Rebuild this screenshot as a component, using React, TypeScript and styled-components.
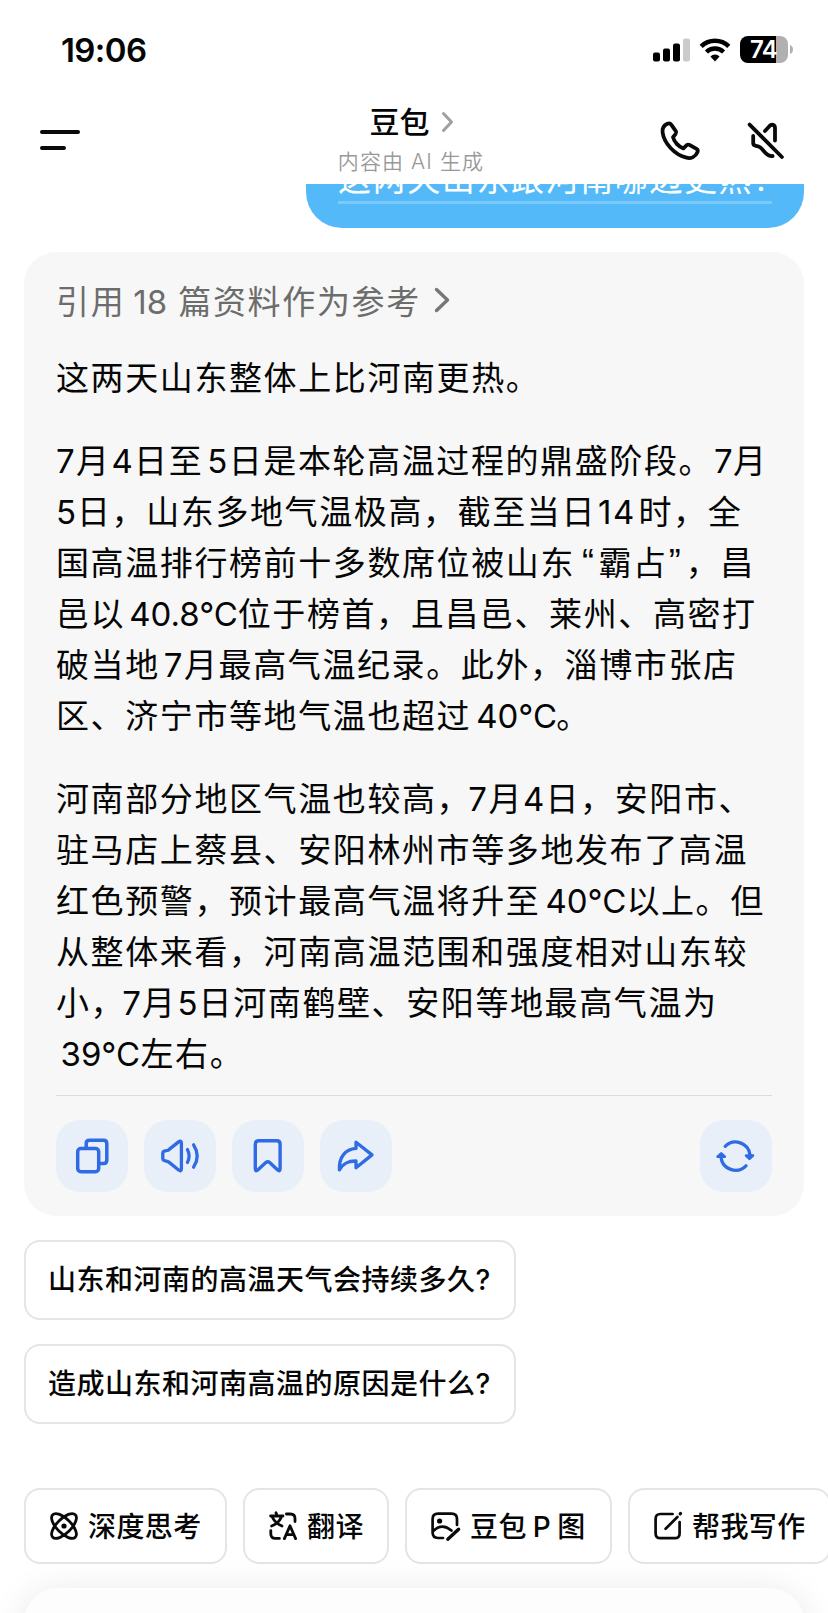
import React from 'react';
import styled, { createGlobalStyle } from 'styled-components';

const GlobalStyle = createGlobalStyle`
  * { box-sizing: border-box; }
  body {
    margin: 0;
    background: #fff;
    color: #060606;
    font-family: Inter, "Noto Sans CJK SC", sans-serif;
  }
  button {
    margin: 0;
    padding: 0;
    border: 0;
    background: none;
    color: inherit;
    font: inherit;
  }
  svg { display: block; flex: none; overflow: visible; }
`;

const Screen = styled.div`
  width: 828px;
  height: 1613px;
  overflow: hidden;
  display: flex;
  flex-direction: column;
`;

const StatusBar = styled.div`
  height: 98px;
  flex: none;
  display: flex;
  justify-content: space-between;
  padding: 36px 35px 0 61px;
`;

const Clock = styled.div`
  font-size: 33px;
  font-weight: 600;
  line-height: 28px;
  letter-spacing: -0.6px;
`;

const StatusIcons = styled.div`
  display: flex;
  gap: 9px;
  height: 27px;
  align-items: center;
`;

const Battery = styled.div`
  width: 48px;
  height: 27px;
  padding-right: 1px;
  border-radius: 8px;
  background: linear-gradient(90deg, #000 36px, #b0b0b0 36px);
  color: #fff;
  font-size: 24px;
  font-weight: 600;
  line-height: 28px;
  letter-spacing: -0.8px;
  text-align: center;
`;

const BatteryWrap = styled.div`
  display: flex;
  align-items: center;
  gap: 2px;
`;

const Header = styled.header`
  height: 86px;
  flex: none;
  display: flex;
  justify-content: space-between;
  padding: 0 42px 0 40px;
`;

const MenuButton = styled.button`
  width: 126px;
  height: 22px;
  margin-top: 31px;
`;

const TitleBlock = styled.div`
  width: 160px;
  margin-right: 4px;
  display: flex;
  flex-direction: column;
  align-items: center;
`;

const Title = styled.div`
  display: flex;
  align-items: center;
  gap: 12px;
  height: 48px;
  font-size: 30px;
  line-height: 44px;
  font-weight: 500;
`;

const Subtitle = styled.div`
  color: #999;
  font-size: 21px;
  line-height: 28px;
  letter-spacing: 1.1px;
  font-weight: 350;
  white-space: nowrap;
  margin-top: 2px;
`;

const HeaderActions = styled.div`
  display: flex;
  gap: 46px;
  padding-top: 23px;
`;

const Conversation = styled.main`
  flex: none;
  height: 1288px;
  overflow: hidden;
  padding: 0 24px;
  display: flex;
  flex-direction: column;
  align-items: flex-start;
`;

const UserBubble = styled.div`
  align-self: flex-end;
  flex: none;
  width: 498px;
  height: 98px;
  margin-top: -54px;
  padding: 24px 32px 0;
  border-radius: 36px;
  background: #54b9f9;
  color: #fff;
`;

const UserText = styled.div`
  height: 50px;
  font-size: 33px;
  line-height: 50px;
  letter-spacing: 1.6px;
  white-space: nowrap;
  border-bottom: 3px solid #79c9fb;
`;

const AnswerCard = styled.article`
  width: 780px;
  height: 964px;
  flex: none;
  margin-top: 24px;
  padding: 22px 32px;
  border-radius: 32px;
  background: #f7f7f7;
`;

const SourceLink = styled.div`
  display: flex;
  align-items: center;
  height: 51px;
  color: #6c6c6c;
  font-size: 33px;
  letter-spacing: 1.65px;
  gap: 14px;
`;

const Paragraph = styled.p`
  margin: 0;
  padding-top: 32px;
  font-size: 33px;
  line-height: 51px;
  letter-spacing: 1.6px;
  &:first-of-type { padding-top: 28px; }
`;

const Line = styled.span`
  display: block;
  height: 51px;
  white-space: nowrap;
`;

const Latin = styled.span<{ $w: number; $x?: number; $ls?: number }>`
  display: inline-block;
  width: ${p => p.$w}px;
  text-indent: ${p => p.$x ?? 0}px;
  letter-spacing: ${p => p.$ls ?? 0}px;
`;

const Quote = styled(Latin)`
  font-family: "Liberation Sans", sans-serif;
  font-size: 36px;
  line-height: 40px;
`;

const Actions = styled.div`
  display: flex;
  gap: 16px;
  margin-top: 15px;
  padding-top: 24px;
  border-top: 1px solid #dcdcdc;
`;

const ActionButton = styled.button<{ $end?: boolean }>`
  width: 72px;
  height: 72px;
  border-radius: 24px;
  background: #e8eff8;
  margin-left: ${p => (p.$end ? 'auto' : 0)};
`;

const Suggestion = styled.button`
  flex: none;
  width: 492px;
  height: 80px;
  margin-top: 24px;
  padding: 0 22px 4px;
  border: 2px solid #e5e5e5;
  border-radius: 16px;
  background: #fff;
  text-align: left;
  font-size: 28px;
  font-weight: 500;
  letter-spacing: 0.5px;
  white-space: nowrap;
`;

const ChipRow = styled.nav`
  display: flex;
  flex: none;
  gap: 16px;
  padding: 16px 0 0 24px;
  height: 116px;
`;

const Chip = styled.button<{ $w: number }>`
  flex: none;
  display: flex;
  align-items: center;
  gap: 10px;
  width: ${p => p.$w}px;
  height: 76px;
  padding-left: 24px;
  border: 2px solid #e5e5e5;
  border-radius: 16px;
  font-size: 28px;
  font-weight: 500;
  letter-spacing: 0.4px;
  word-spacing: -1.8px;
  white-space: nowrap;
`;

const ChipLabel = styled.span`
  padding-bottom: 2px;
`;

const Composer = styled.div`
  flex: none;
  width: 780px;
  height: 112px;
  margin-left: 24px;
  border-radius: 34px;
  background: #fdfdfd;
  box-shadow: 0 4px 36px rgba(0, 0, 0, 0.1);
`;

const stroke = (width: number, color = '#0a0a0a') => ({
  fill: 'none',
  stroke: color,
  strokeWidth: width,
  strokeLinecap: 'round' as const,
  strokeLinejoin: 'round' as const,
});
const BLUE = '#2f6be4';

const SignalIcon = () => (
  <svg width="37" height="24" viewBox="0 0 37 24">
    <rect x="0" y="14.5" width="7" height="9" rx="2" />
    <rect x="10" y="10.5" width="7" height="13" rx="2" />
    <rect x="20" y="5.5" width="7" height="18" rx="2" />
    <rect x="30" y="0.5" width="7" height="23" rx="2" fill="#cbcbcb" />
  </svg>
);

const WifiIcon = () => (
  <svg width="32" height="24" viewBox="0 0 32 24">
    <path d="M2.2 8.3A20 20 0 0 1 29.8 8.3" fill="none" stroke="#000" strokeWidth="4.6" />
    <path d="M7.4 14A12.4 12.4 0 0 1 24.6 14" fill="none" stroke="#000" strokeWidth="4.4" />
    <path d="M11.4 18.4a6.8 6.8 0 0 1 9.2 0L16 23.5z" />
  </svg>
);

const Chevron = ({ color, w, h, s }: { color: string; w: number; h: number; s: number }) => (
  <svg width={w} height={h} viewBox={`0 0 ${w} ${h}`}>
    <path d={`M1.5 1.5L${w - 1.5} ${h / 2}L1.5 ${h - 1.5}`} {...stroke(s, color)} />
  </svg>
);

const PhoneIcon = () => (
  <svg width="40" height="40" viewBox="0 0 40 40">
    <path
      d="M7.3 2.8C8.9 2.1 10.4 2.4 11.4 3.8L15.8 10.2C16.5 11.2 16.4 12 15.7 12.9L13 16.2C14 20.6 18.6 25.8 23.4 27.4L26.7 24.2C27.5 23.5 28.5 23.4 29.5 23.9L36.5 27.9C37.7 28.6 38 29.9 37.4 31.2C35.5 35.6 31 37.8 26.5 36.7C14.5 33.8 4 22 2.6 11.5C2.1 7.8 4 4.3 7.3 2.8Z"
      {...stroke(3.8)}
    />
  </svg>
);

const MuteIcon = () => (
  <svg width="40" height="40" viewBox="0 0 40 40">
    <path
      d="M3.6 3.6L35.9 36M19 10L23.6 4.9C25.6 2.8 29 3.6 29 7V19.5M7.2 15V22C7.2 23.8 8 24.5 9.8 24.8L12.2 25.3C13.6 25.6 14.4 26.3 15.3 27.3L19.5 32C21.6 34.3 23.4 35.3 26.6 35"
      {...stroke(3.8)}
    />
  </svg>
);

const CopyIcon = () => (
  <svg width="72" height="72" viewBox="0 0 72 72">
    <g {...stroke(3.5, BLUE)}>
      <rect x="21.7" y="28.5" width="21" height="23.2" rx="3.2" />
      <path d="M30.2 27.5V23.6Q30.2 20.3 33.4 20.3H47.6Q50.8 20.3 50.8 23.6V40.3Q50.8 43.5 47.6 43.5H44" />
    </g>
  </svg>
);

const SpeakerIcon = () => (
  <svg width="72" height="72" viewBox="0 0 72 72">
    <path
      d="M18.8 33Q18.8 31.6 20.2 31.2L23 30.5Q24.3 30.2 25.2 29.4L34.6 21.9Q37.4 20 37.4 23.2V48.8Q37.4 52 34.6 50L25.2 42.4Q24.3 41.7 23 41.3L20.2 40.5Q18.8 40.1 18.8 38.7ZM43.4 29.6Q46.8 36 43.4 42.4M49.6 24.8Q56.8 36 49.6 47.2"
      {...stroke(3.3, BLUE)}
    />
  </svg>
);

const BookmarkIcon = () => (
  <svg width="72" height="72" viewBox="0 0 72 72">
    <path
      d="M23.3 24.2Q23.3 20.8 26.6 20.8H44.8Q48.1 20.8 48.1 24.2V48.6Q48.1 52.2 45.4 49.8L37.7 42.6Q35.8 41 33.8 42.6L26 49.8Q23.3 52.2 23.3 48.6Z"
      {...stroke(3.4, BLUE)}
    />
  </svg>
);

const ShareIcon = () => (
  <svg width="72" height="72" viewBox="0 0 72 72">
    <path
      d="M36 22.2L52 34.9L36 47.8V41C28 40.8 23.5 43.2 19.4 49.8C18.8 37 25.4 29.2 36 28.4Z"
      {...stroke(3.3, BLUE)}
    />
  </svg>
);

const RefreshIcon = () => (
  <svg width="72" height="72" viewBox="0 0 72 72">
    <path d="M25.2 26.3A14.6 14.6 0 0 1 50 35M46 45.8A14.6 14.6 0 0 1 21 37" {...stroke(3.3, BLUE)} />
    <path d="M46 35.6H53L49.5 38.8ZM17.6 36.8H24.8L21.2 33.4Z" {...stroke(2.6, BLUE)} fill={BLUE} />
  </svg>
);

const AtomIcon = () => (
  <svg width="28" height="28" viewBox="0 0 28 28">
    <g {...stroke(2.8)}>
      <ellipse cx="14" cy="14" rx="16" ry="7.2" transform="rotate(45 14 14)" />
      <ellipse cx="14" cy="14" rx="16" ry="7.2" transform="rotate(-45 14 14)" />
    </g>
    <circle cx="14" cy="14" r="2.6" />
  </svg>
);

const TranslateIcon = () => (
  <svg width="28" height="28" viewBox="0 0 28 28">
    <path
      d="M1.6 4H14M7 0.8L8 3.6M3.4 5.2C5.2 9.2 8.2 12 13 14M12.2 5.2C10.6 9.4 7.4 12.2 2.6 14M17.4 2H21.4Q26 2 26 6.6V9.6M1.8 18.6V21.8Q1.8 26.4 6.4 26.4H10.4M15.4 26.6L21 13.8L26.6 26.6M17.6 22.6H24.4"
      {...stroke(2.8)}
    />
  </svg>
);

const ImageEditIcon = () => (
  <svg width="29" height="28" viewBox="0 0 29 28">
    <path
      d="M26 13V7Q26 1.6 20.6 1.6H7Q1.6 1.6 1.6 7V20.6Q1.6 26 7 26H12M1.8 19.6C7.6 13.6 14 13 20.4 18.6"
      {...stroke(2.7)}
    />
    <path d="M16.8 27.2L27.6 17.2" {...stroke(3.4)} />
    <circle cx="8.6" cy="9" r="2.6" />
  </svg>
);

const WriteIcon = () => (
  <svg width="28" height="28" viewBox="0 0 28 28">
    <path d="M18.6 2H6.4Q1.6 2 1.6 6.8V21.4Q1.6 26.2 6.4 26.2H20.8Q25.6 26.2 25.6 21.4V10M11.6 16.8L23.4 5" {...stroke(2.7)} />
    <path d="M26.2 1.8L26.5 1.5" {...stroke(3.2)} />
  </svg>
);

export default function App() {
  return (
    <Screen>
      <GlobalStyle />
      <StatusBar>
        <Clock>19:06</Clock>
        <StatusIcons>
          <SignalIcon />
          <WifiIcon />
          <BatteryWrap>
            <Battery>74</Battery>
            <svg width="3" height="9" viewBox="0 0 3 9">
              <path d="M0 0Q3 1.2 3 4.5T0 9Z" fill="#b0b0b0" />
            </svg>
          </BatteryWrap>
        </StatusIcons>
      </StatusBar>

      <Header>
        <MenuButton aria-label="菜单">
          <svg width="40" height="22" viewBox="0 0 40 22">
            <path d="M2 3H38M2 19H24" {...stroke(4)} />
          </svg>
        </MenuButton>
        <TitleBlock>
          <Title>
            豆包
            <Chevron color="#a0a0a0" w={11} h={20} s={3} />
          </Title>
          <Subtitle>内容由 AI 生成</Subtitle>
        </TitleBlock>
        <HeaderActions>
          <PhoneIcon />
          <MuteIcon />
        </HeaderActions>
      </Header>

      <Conversation>
        <UserBubble>
          <UserText>这两天山东跟河南哪边更热?</UserText>
        </UserBubble>

        <AnswerCard>
          <SourceLink>
            <span>引用<Latin $w={53} $x={8}>18</Latin>篇资料作为参考</span>
            <Chevron color="#777" w={14} h={24} s={3.4} />
          </SourceLink>

          <Paragraph>
            <Line>这两天山东整体上比河南更热。</Line>
          </Paragraph>

          <Paragraph>
            <Line><Latin $w={20}>7</Latin>月<Latin $w={23.5} $x={1}>4</Latin>日至<Latin $w={25.4} $x={4}>5</Latin>日是本轮高温过程的鼎盛阶段。<Latin $w={20} $x={1}>7</Latin>月</Line>
            <Line><Latin $w={21}>5</Latin>日，山东多地气温极高，截至当日<Latin $w={42.5} $x={2} $ls={1.5}>14</Latin>时，全</Line>
            <Line>国高温排行榜前十多数席位被山东<Quote $w={23.5} $x={7}>“</Quote>霸占<Quote $w={18} $x={1}>”</Quote>，昌</Line>
            <Line>邑以<Latin $w={112.5} $x={4}>40.8°C</Latin>位于榜首，且昌邑、莱州、高密打</Line>
            <Line>破当地<Latin $w={24.2} $x={4}>7</Latin>月最高气温纪录。此外，淄博市张店</Line>
            <Line>区、济宁市等地气温也超过<Latin $w={85} $x={5}>40°C</Latin>。</Line>
          </Paragraph>

          <Paragraph>
            <Line>河南部分地区气温也较高，<Latin $w={17.3} $x={-3}>7</Latin>月<Latin $w={22.4}>4</Latin>日，安阳市、</Line>
            <Line>驻马店上蔡县、安阳林州市等多地发布了高温</Line>
            <Line>红色预警，预计最高气温将升至<Latin $w={86} $x={5}>40°C</Latin>以上。但</Line>
            <Line>从整体来看，河南高温范围和强度相对山东较</Line>
            <Line>小，<Latin $w={16.8} $x={-3}>7</Latin>月<Latin $w={22} $x={1}>5</Latin>日河南鹤壁、安阳等地最高气温为</Line>
            <Line><Latin $w={84.5} $x={4.5}>39°C</Latin>左右。</Line>
          </Paragraph>

          <Actions>
            <ActionButton aria-label="复制"><CopyIcon /></ActionButton>
            <ActionButton aria-label="朗读"><SpeakerIcon /></ActionButton>
            <ActionButton aria-label="收藏"><BookmarkIcon /></ActionButton>
            <ActionButton aria-label="分享"><ShareIcon /></ActionButton>
            <ActionButton aria-label="重新生成" $end><RefreshIcon /></ActionButton>
          </Actions>
        </AnswerCard>

        <Suggestion>山东和河南的高温天气会持续多久?</Suggestion>
        <Suggestion>造成山东和河南高温的原因是什么?</Suggestion>
      </Conversation>

      <ChipRow>
        <Chip $w={203}><AtomIcon /><ChipLabel>深度思考</ChipLabel></Chip>
        <Chip $w={146}><TranslateIcon /><ChipLabel>翻译</ChipLabel></Chip>
        <Chip $w={207}><ImageEditIcon /><ChipLabel>豆包 P 图</ChipLabel></Chip>
        <Chip $w={203}><WriteIcon /><ChipLabel>帮我写作</ChipLabel></Chip>
      </ChipRow>
      <Composer />
    </Screen>
  );
}
